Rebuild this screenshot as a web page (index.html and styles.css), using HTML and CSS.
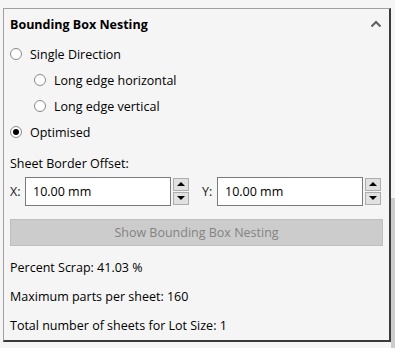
FILE: index.html
```html
<!DOCTYPE html>
<html>
<head>
<meta charset="utf-8">
<link rel="stylesheet" href="styles.css">
</head>
<body>
<div class="page">
  <div class="panel">
    <div class="header">
      <span class="title">Bounding Box Nesting</span>
      <svg class="chev" width="12" height="8" viewBox="0 0 12 8"><path d="M1.5 6.5 L6 2 L10.5 6.5" fill="none" stroke="#5f5f5f" stroke-width="2"/></svg>
    </div>
    <div class="options">
      <label class="radio-row"><span class="radio"></span>Single Direction</label>
      <label class="radio-row sub"><span class="radio"></span>Long edge horizontal</label>
      <label class="radio-row sub"><span class="radio"></span>Long edge vertical</label>
      <label class="radio-row"><span class="radio checked"></span>Optimised</label>
    </div>
    <div class="section-label">Sheet Border Offset:</div>
    <div class="offsets">
      <div class="field">
        <span class="axis">X:</span>
        <div class="input">10.00 mm</div>
        <div class="spin">
          <div class="spin-btn"><span class="tri up"></span></div>
          <div class="spin-btn"><span class="tri down"></span></div>
        </div>
      </div>
      <div class="field">
        <span class="axis">Y:</span>
        <div class="input">10.00 mm</div>
        <div class="spin">
          <div class="spin-btn"><span class="tri up"></span></div>
          <div class="spin-btn"><span class="tri down"></span></div>
        </div>
      </div>
    </div>
    <div class="action">Show Bounding Box Nesting</div>
    <div class="info">Percent Scrap: 41.03 %</div>
    <div class="info">Maximum parts per sheet: 160</div>
    <div class="info">Total number of sheets for Lot Size: 1</div>
  </div>
  <div class="track"><div class="thumb"></div></div>
</div>
</body>
</html>
```

FILE: styles.css
```css
html, body {
  margin: 0;
  padding: 0;
  background: #f5f5f5;
  font-family: "Open Sans", "Noto Sans", sans-serif;
  font-size: 12.5px;
  color: #000;
  width: 395px;
  height: 348px;
  overflow: hidden;
}
.page {
  display: flex;
  padding-left: 3px;
  padding-top: 8px;
  height: 340px;
}
.panel {
  box-sizing: border-box;
  width: 388px;
  height: 334px;
  border-top: 1px solid #a0a0a0;
  border-left: 1px solid #a0a0a0;
  border-right: 2px solid #3a3a3a;
  border-bottom: 2px solid #3a3a3a;
  background: #f5f5f5;
  padding: 0 0 0 6px;
  display: flex;
  flex-direction: column;
}
.track {
  width: 4px;
  padding-top: 190px;
}
.thumb {
  height: 160px;
  background: #cdcdcd;
}
.header {
  height: 31px;
  display: flex;
  align-items: center;
  justify-content: space-between;
  padding-right: 7px;
}
.title {
  font-weight: 700;
}
.chev { display: block; }
.options {
  display: flex;
  flex-direction: column;
  margin-top: 2px;
}
.radio-row {
  height: 26px;
  display: flex;
  align-items: center;
  gap: 8px;
}
.radio-row.sub { padding-left: 24px; }
.radio {
  box-sizing: border-box;
  width: 12px;
  height: 12px;
  border-radius: 50%;
  border: 1px solid #8a8a8a;
  background: #fff;
  display: flex;
  align-items: center;
  justify-content: center;
}
.radio.checked::after {
  content: "";
  width: 6px;
  height: 6px;
  border-radius: 50%;
  background: #000;
}
.section-label {
  height: 26px;
  display: flex;
  align-items: center;
  margin-top: 5px;
}
.offsets {
  display: flex;
  gap: 13px;
  margin-top: 1px;
}
.field {
  display: flex;
  align-items: center;
  height: 29px;
}
.axis {
  width: 15px;
  color: #1a1a1a;
}
.input {
  box-sizing: border-box;
  width: 146px;
  height: 29px;
  border: 1px solid #7a7a7a;
  background: #fff;
  display: flex;
  align-items: center;
  padding-left: 7px;
}
.spin {
  display: flex;
  flex-direction: column;
  gap: 1px;
  margin-left: 2px;
}
.spin-btn {
  box-sizing: border-box;
  width: 16px;
  height: 13px;
  background: #e1e1e1;
  border: 1px solid #adadad;
  display: flex;
  align-items: center;
  justify-content: center;
}
.tri {
  width: 0;
  height: 0;
  border-left: 4px solid transparent;
  border-right: 4px solid transparent;
}
.tri.up { border-bottom: 4px solid #000; }
.tri.down { border-top: 4px solid #000; }
.action {
  box-sizing: border-box;
  width: 373px;
  height: 28px;
  margin-top: 13px;
  background: #cccccc;
  border: 1px solid #bfbfbf;
  color: #838383;
  display: flex;
  align-items: center;
  justify-content: center;
}
.info {
  height: 29.5px;
  display: flex;
  align-items: center;
}
.action + .info { margin-top: 7px; }
```
